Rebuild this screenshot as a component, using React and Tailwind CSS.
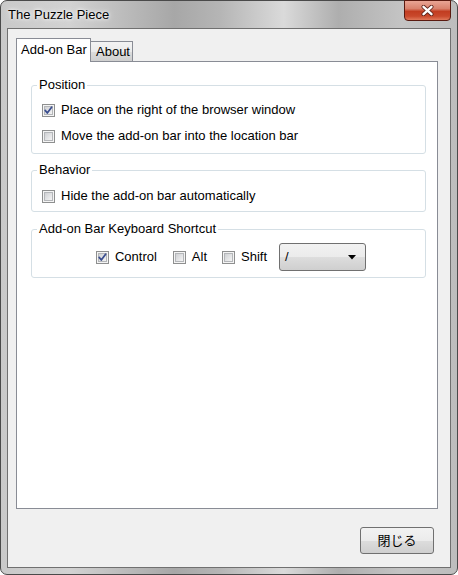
import React from "react";

function Check({ checked }) {
  return (
    <span className="relative inline-block w-[13px] h-[13px] border border-[#8e8f8f] bg-[#f4f4f4] shrink-0">
      <span className="absolute left-[1px] top-[1px] w-[9px] h-[9px] border border-[#b4b6b9] bg-[linear-gradient(135deg,#cfd1d4,#f4f4f4)]" />
      {checked && (
        <svg className="absolute left-0 top-0" width="11" height="11" viewBox="0 0 11 11">
          <path d="M2.2 5.4 L4.3 8 L8.6 2.2" fill="none" stroke="#3a4d8f" strokeWidth="1.7" strokeLinecap="round" strokeLinejoin="round" />
        </svg>
      )}
    </span>
  );
}

function Row({ checked, children, className = "" }) {
  return (
    <div className={"flex items-center h-[16px] " + className}>
      <Check checked={checked} />
      <span className="ml-[6px] leading-[16px]">{children}</span>
    </div>
  );
}

function Group({ title, children, className = "" }) {
  return (
    <fieldset className={"border border-[#d5dfe5] rounded-[3px] mx-0 " + className}>
      <legend className="ml-[5px] px-[2px] leading-[16px]">{title}</legend>
      {children}
    </fieldset>
  );
}

export default function App() {
  return (
    <div className="w-[458px] h-[575px] font-['Liberation_Sans','Noto_Sans_CJK_JP',sans-serif] text-[13px] text-black">
      <div className="relative w-[458px] h-[575px] rounded-[7px] border border-[#4a4a4a] bg-[linear-gradient(90deg,#c9c9c9_0%,#d2d2d2_15%,#a7a7a7_38%,#b5b5b5_48%,#dadada_62%,#aeaeae_74%,#c4c4c4_88%,#bdbdbd_100%)] flex flex-col">
        {/* title bar */}
        <div className="h-[27px] flex items-center pl-[7px] pt-[1px]">
          <span className="text-[13px] leading-[16px] [text-shadow:0_0_6px_#ffffff,0_0_3px_#ffffff]">The Puzzle Piece</span>
        </div>
        {/* close button */}
        <div className="absolute top-[-1px] right-[6px] w-[47px] h-[21px] rounded-b-[4px] border border-[#5a1a10] bg-[linear-gradient(180deg,#e9a595_0%,#d9826d_40%,#c23d21_55%,#c9492c_80%,#e0785a_100%)] flex items-center justify-center">
          <svg width="13" height="11" viewBox="0 0 13 11">
            <path d="M2.5 1.8 L10.5 9.2 M10.5 1.8 L2.5 9.2" stroke="#5b2118" strokeWidth="4" strokeLinecap="round" />
            <path d="M2.5 1.8 L10.5 9.2 M10.5 1.8 L2.5 9.2" stroke="#ffffff" strokeWidth="2.4" strokeLinecap="round" />
          </svg>
        </div>
        {/* client area */}
        <div className="mx-[6px] h-[540px] border border-[#707070] bg-[#f0f0f0] flex flex-col">
          <div className="pt-[9px] pl-[8px] pr-[12px]">
            {/* tabs */}
            <div className="flex items-end h-[23px]">
              <div className="relative z-10 h-[24px] -mb-[1px] w-[75px] border border-b-0 border-[#898c95] bg-white flex items-start pl-[4px] pt-[3px] leading-[16px]">
                Add-on Bar
              </div>
              <div className="h-[20px] w-[42px] border border-l-0 border-b-0 border-[#898c95] bg-[linear-gradient(180deg,#f3f3f3_0%,#ebebeb_50%,#dddddd_51%,#cfcfcf_100%)] flex items-start pl-[5px] pt-[2px] leading-[16px]">
                About
              </div>
            </div>
            {/* panel */}
            <div className="h-[448px] border border-[#898c95] bg-white pt-[15px] pl-[14px] pr-[11px]">
              <Group title="Position" className="pb-[9px]">
                <Row checked className="mt-[9px] pl-[10px]">Place on the right of the browser window</Row>
                <Row className="mt-[10px] pl-[10px]">Move the add-on bar into the location bar</Row>
              </Group>
              <Group title="Behavior" className="mt-[8px] pb-[7px]">
                <Row className="mt-[10px] pl-[10px]">Hide the add-on bar automatically</Row>
              </Group>
              <Group title="Add-on Bar Keyboard Shortcut" className="mt-[9px] pb-[6px]">
                <div className="flex items-center justify-center mt-[6px] pl-[5px]">
                  <Row checked>Control</Row>
                  <Row className="ml-[16px]">Alt</Row>
                  <Row className="ml-[15px]">Shift</Row>
                  <div className="ml-[12px] w-[87px] h-[28px] rounded-[3px] border border-[#707070] bg-[linear-gradient(180deg,#f2f2f2_0%,#ebebeb_50%,#dddddd_51%,#cfcfcf_100%)] flex items-center justify-between pl-[5px] pr-[9px]">
                    <span className="leading-[16px]">/</span>
                    <svg width="8" height="5" viewBox="0 0 8 5">
                      <path d="M0 0 L8 0 L4 4.5 Z" fill="#000" />
                    </svg>
                  </div>
                </div>
              </Group>
            </div>
          </div>
          <div className="flex justify-end pr-[16px] mt-[18px]">
            <div className="w-[74px] h-[27px] rounded-[3px] border border-[#707070] bg-[linear-gradient(180deg,#f2f2f2_0%,#ebebeb_50%,#dddddd_51%,#cfcfcf_100%)] flex items-center justify-center leading-[16px] text-[13px]">
              閉じる
            </div>
          </div>
        </div>
      </div>
    </div>
  );
}
